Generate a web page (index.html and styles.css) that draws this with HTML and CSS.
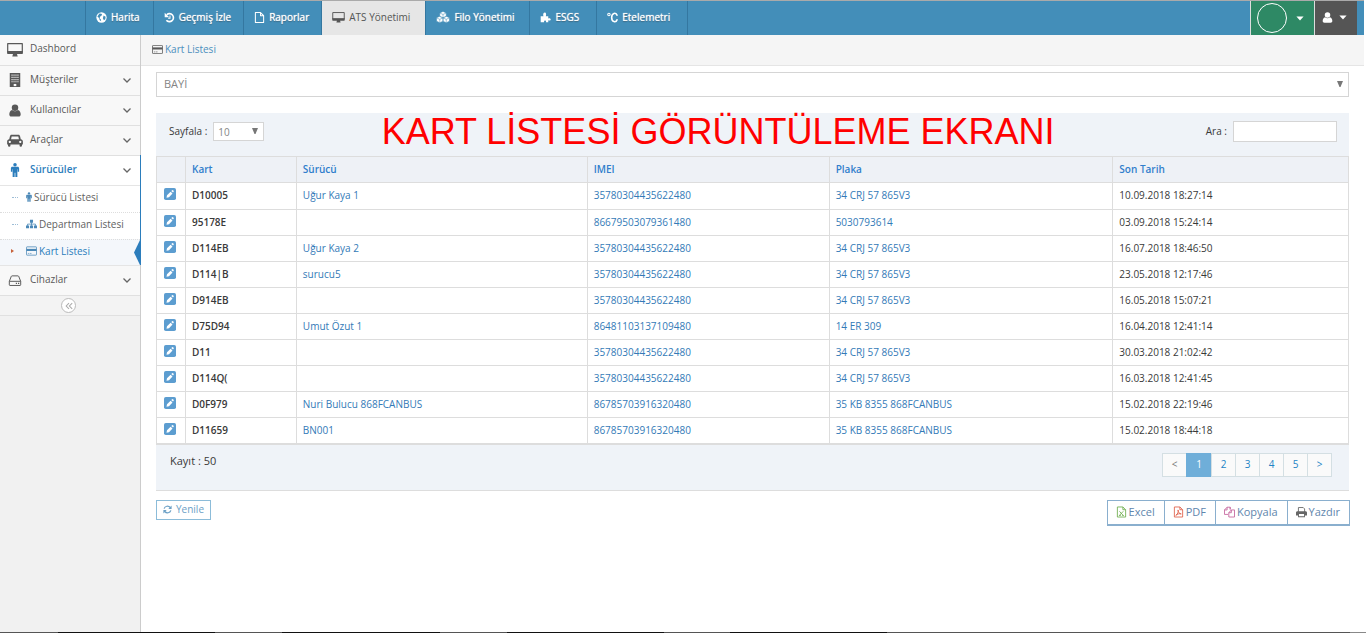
FILE: index.html
```html
<!DOCTYPE html>
<html lang="tr">
<head>
<meta charset="utf-8">
<title>Kart Listesi</title>
<link rel="stylesheet" href="styles.css">
</head>
<body>
<svg class="sprite" aria-hidden="true">
  <symbol id="globe" viewBox="0 0 16 16"><circle cx="8" cy="8" r="7.5" fill="currentColor"/><path d="M5 2l3 .5 1 2-2.5 1.5L5 9l2 1.500.5 3L5.500 12 4 8.500 2 6.500zM11 5l3 2-.5 3.500-2 1.500-1.500-3z" fill="#438eb9"/></symbol>
  <symbol id="history" viewBox="0 0 16 16"><path d="M4 4A5.800 5.800 0 1 1 3.500 12" fill="none" stroke="currentColor" stroke-width="2.400"/><path d="M1 1v6.500h6.500z" fill="currentColor"/><path d="M8.700 5v4H6" fill="none" stroke="currentColor" stroke-width="1.500"/></symbol>
  <symbol id="file" viewBox="0 0 16 16"><path d="M2 .800h7.500l4.500 4.500v10H2zM9.500.800v4.700H14" fill="none" stroke="currentColor" stroke-width="1.500" stroke-linejoin="round"/></symbol>
  <symbol id="desktop" viewBox="0 0 16 14"><path d="M.7.700h14.600V9H.7z" fill="none" stroke="currentColor" stroke-width="1.200" stroke-linejoin="round"/><path d="M.1 8h15.800v2.300a.7.700 0 0 1-.7.700H10l.7 2.500H5.300L6 11H.8a.7.700 0 0 1-.7-.7z" fill="currentColor"/></symbol>
  <symbol id="cubes" viewBox="0 0 18 16"><g fill="currentColor" stroke="#438eb9" stroke-width=".7"><path d="M9 .5l4.300 2v4.700L9 9.500 4.700 7.200V2.500zM4.700 7l4.300 2v4.500l-4.300 2.200L.4 13.500V9zM13.300 7l4.300 2v4.500l-4.300 2.200L9 13.500V9z"/><path d="M4.700 2.700L9 4.600l4.300-1.900M9 4.600v4.600M.4 9.200l4.300 1.900L9 9.200l4.300 1.900 4.300-1.900M4.700 11.100v4.500M13.300 11.100v4.500" fill="none"/></g></symbol>
  <symbol id="puzzle" viewBox="0 0 16 16"><path d="M1 6h4c-2-6.500 5-7.500 3.700-1L8.500 6H12v3.500c4.500-2 5 4.500 0 2.500v3H8.500c1.500-3.500-3.500-3.500-2.500 0H1z" fill="currentColor"/></symbol>
  <symbol id="celsius" viewBox="0 0 16 16"><circle cx="2.800" cy="3.500" r="1.800" fill="none" stroke="currentColor" stroke-width="1.500"/><path d="M15 5.500C13-.5 6.800 1.500 6.800 8s6.200 8.500 8.200 2.500" fill="none" stroke="currentColor" stroke-width="2.300"/></symbol>
  <symbol id="user" viewBox="0 0 16 16"><circle cx="8" cy="4.500" r="4" fill="currentColor"/><path d="M4.500 7.500C2 8 1 10.500 1 13c0 1.500 1 2.500 2.500 2.500h9c1.500 0 2.500-1 2.500-2.500 0-2.500-1-5-3.500-5.500-2 2-5 2-7 0z" fill="currentColor"/></symbol>
  <symbol id="building" viewBox="0 0 16 16"><path d="M2 0h12v16H2z" fill="currentColor"/><path d="M4 2.500h8M4 5h8M4 7.500h8M4 10h8" stroke="#f8f8f8" stroke-width="1.300" stroke-dasharray="1.250 1"/><path d="M6.500 12.500h3V15h-3z" fill="#f8f8f8"/></symbol>
  <symbol id="car" viewBox="0 0 18 16"><path fill-rule="evenodd" d="M5 2h8c1 0 1.500.7 1.800 1.700L15.600 7c1.500.2 2.400 1.200 2.400 2.500V13h-1v1.200a1.400 1.400 0 0 1-2.800 0V13H3.800v1.200a1.400 1.400 0 0 1-2.800 0V13H0V9.500C0 8.200.9 7.200 2.400 7l.8-3.300C3.500 2.700 4 2 5 2zm.2 2L4.500 7h9l-.7-3zM3 8.800a1.300 1.300 0 1 0 .1 0zm12 0a1.300 1.300 0 1 0 .1 0z" fill="currentColor"/></symbol>
  <symbol id="male" viewBox="0 0 10 16"><circle cx="5" cy="2" r="2" fill="currentColor"/><path d="M2 4.300h6c1 0 1.700.7 1.700 1.700v4H8.100V7h-.4v9H5.400v-5h-.8v5H2.300V7h-.4v3H.3V6c0-1 .7-1.700 1.700-1.700z" fill="currentColor"/></symbol>
  <symbol id="sitemap" viewBox="0 0 18 16"><path d="M6.500 1h5v5h-5zM0 10.500h5v4.500H0zM6.500 10.500h5v4.500h-5zM13 10.500h5v4.500h-5z" fill="currentColor"/><path d="M9 5v6M2.500 11V8.200h13V11" fill="none" stroke="currentColor" stroke-width="1.300"/></symbol>
  <symbol id="card" viewBox="0 0 18 15"><rect x=".7" y=".7" width="16.600" height="13.600" rx="1" fill="none" stroke="currentColor" stroke-width="1.300"/><path d="M.7 4h16.600v3.500H.7z" fill="currentColor"/><path d="M3 11.500h2M6 11.500h3" stroke="currentColor"/></symbol>
  <symbol id="hdd" viewBox="0 0 16 16"><path d="M1 9l2.400-6c.2-.5.500-.7 1-.7h7.200c.5 0 .8.200 1 .7L15 9v4.300c0 .5-.3.8-.8.8H1.800c-.5 0-.8-.3-.8-.8zM1 9h14" fill="none" stroke="currentColor" stroke-width="1.200"/><path d="M9 11.500h1.500M11.700 11.500h1.500" stroke="currentColor" stroke-width="1.500"/></symbol>
  <symbol id="down" viewBox="0 0 10 10"><path d="M1.500 3.500L5 7l3.500-3.500" fill="none" stroke="currentColor" stroke-width="1.300"/></symbol>
  <symbol id="caret" viewBox="0 0 10 6"><path d="M.5.500h9L5 5.500z" fill="currentColor"/></symbol>
  <symbol id="arrow" viewBox="0 0 6 6"><path d="M0 0h6L3.500 6h-1z" fill="currentColor"/></symbol>
  <symbol id="edit" viewBox="0 0 12 12"><rect width="12" height="12" rx="1.800" fill="#5c9dd0"/><path d="M2.500 9.700l.5-2.500 3.600-3.500 1.900 1.900L5 9.200zM7.200 3.100l1-.9c.5-.4 1.900.9 1.500 1.500l-.7.900z" fill="#fff"/></symbol>
  <symbol id="refresh" viewBox="0 0 16 16"><path d="M2 6.500C3.500 1.500 9.500.800 13 4.500M14 9.500c-1.500 5-7.500 5.700-11 2" fill="none" stroke="currentColor" stroke-width="2.200"/><path d="M15.300 1v6H9.500zM.7 15V9h5.800z" fill="currentColor"/></symbol>
  <symbol id="excel" viewBox="0 0 16 16"><path d="M2 .700h8l4 4v10.600H2zM10 .700v4h4M5 7l5.500 6M10.500 7L5 13M4.500 13h2.500M9 13h2.300" fill="none" stroke="currentColor" stroke-width="1.200"/></symbol>
  <symbol id="pdf" viewBox="0 0 16 16"><path d="M2 .700h8l4 4v10.600H2zM10 .700v4h4M4 13c3-2 4-5 3.300-8C8 9 9 10.500 12 10.800 9 10 6 11 4 13z" fill="none" stroke="currentColor" stroke-width="1.200"/></symbol>
  <symbol id="copy" viewBox="0 0 16 16"><path d="M6 11.500H.700V5L4.500 1H9v3.500M4.500 1v4H.700M7 15.300V9l3.700-4h4.600v10.300zM10.700 5v4H7M9 1v3" fill="none" stroke="currentColor" stroke-width="1.300"/></symbol>
  <symbol id="print" viewBox="0 0 16 16"><path d="M3.500 8V1.500h7l2 2V8" fill="none" stroke="currentColor" stroke-width="1.300"/><path fill-rule="evenodd" d="M2 7h12c1 0 2 .8 2 2v4h-3v2.500H3V13H0V9c0-1.200 1-2 2-2zm2.300 4v3.200h7.400V11z" fill="currentColor"/></symbol>
</svg>

<header class="topbar">
  <nav class="menu">
    <a href="#"><svg class="ico"><use href="#globe"/></svg>Harita</a>
    <a href="#"><svg class="ico"><use href="#history"/></svg>Geçmiş İzle</a>
    <a href="#"><svg class="ico"><use href="#file"/></svg>Raporlar</a>
    <a href="#" class="active"><svg class="ico wide"><use href="#desktop"/></svg>ATS Yönetimi</a>
    <a href="#"><svg class="ico wide"><use href="#cubes"/></svg>Filo Yönetimi</a>
    <a href="#"><svg class="ico"><use href="#puzzle"/></svg>ESGS</a>
    <a href="#"><svg class="ico"><use href="#celsius"/></svg>Etelemetri</a>
  </nav>
  <div class="account">
    <button class="firm" aria-label="Firma"><span class="ring"></span><svg class="caret"><use href="#caret"/></svg></button>
    <button class="person" aria-label="Kullanıcı"><svg class="ico"><use href="#user"/></svg><svg class="caret"><use href="#caret"/></svg></button>
  </div>
</header>

<div class="layout">
  <aside class="sidebar">
    <ul class="side">
      <li><a href="#"><svg class="lead"><use href="#desktop"/></svg>Dashbord</a></li>
      <li><a href="#"><svg class="lead"><use href="#building"/></svg>Müşteriler<svg class="chev"><use href="#down"/></svg></a></li>
      <li><a href="#"><svg class="lead small"><use href="#user"/></svg>Kullanıcılar<svg class="chev"><use href="#down"/></svg></a></li>
      <li><a href="#"><svg class="lead"><use href="#car"/></svg>Araçlar<svg class="chev"><use href="#down"/></svg></a></li>
      <li class="open"><a href="#"><svg class="lead"><use href="#male"/></svg>Sürücüler<svg class="chev"><use href="#down"/></svg></a>
        <ul class="sub">
          <li><a href="#"><span class="dots"></span><svg class="thin"><use href="#male"/></svg>Sürücü Listesi</a></li>
          <li><a href="#"><span class="dots"></span><svg><use href="#sitemap"/></svg>Departman Listesi</a></li>
          <li class="current"><a href="#"><span class="mark"></span><svg><use href="#card"/></svg>Kart Listesi</a></li>
        </ul>
      </li>
      <li><a href="#"><svg class="lead small"><use href="#hdd"/></svg>Cihazlar<svg class="chev"><use href="#down"/></svg></a></li>
    </ul>
    <div class="collapse"><button aria-label="Menüyü daralt"><svg viewBox="0 0 10 10"><path d="M5 1.500L1.500 5 5 8.500M9 1.500L5.500 5 9 8.500" fill="none" stroke="currentColor" stroke-width="1.300"/></svg></button></div>
  </aside>

  <main class="main">
    <div class="crumbs"><svg><use href="#card"/></svg><a href="#">Kart Listesi</a></div>
    <div class="content">
      <div class="pick dealer">
        <select aria-label="Bayi"><option>BAYİ</option></select>
        <svg><use href="#arrow"/></svg>
      </div>

      <section class="panel">
        <div class="tools">
          <label for="size">Sayfala :</label>
          <div class="pick size">
            <select id="size"><option>10</option></select>
            <svg><use href="#arrow"/></svg>
          </div>
          <h1>KART LİSTESİ GÖRÜNTÜLEME EKRANI</h1>
          <label for="search">Ara :</label>
          <input id="search" type="text">
        </div>
        <table>
          <colgroup><col class="c-edit"><col class="c-card"><col class="c-driver"><col class="c-imei"><col class="c-plate"><col></colgroup>
          <thead><tr><th></th><th>Kart</th><th>Sürücü</th><th>IMEI</th><th>Plaka</th><th>Son Tarih</th></tr></thead>
          <tbody>
            <tr><td><a href="#" aria-label="Düzenle"><svg><use href="#edit"/></svg></a></td><td class="card">D10005</td><td><a href="#">Uğur Kaya 1</a></td><td><a href="#">35780304435622480</a></td><td><a href="#">34 CRJ 57 865V3</a></td><td>10.09.2018 18:27:14</td></tr>
            <tr><td><a href="#" aria-label="Düzenle"><svg><use href="#edit"/></svg></a></td><td class="card">95178E</td><td></td><td><a href="#">86679503079361480</a></td><td><a href="#">5030793614</a></td><td>03.09.2018 15:24:14</td></tr>
            <tr><td><a href="#" aria-label="Düzenle"><svg><use href="#edit"/></svg></a></td><td class="card">D114EB</td><td><a href="#">Uğur Kaya 2</a></td><td><a href="#">35780304435622480</a></td><td><a href="#">34 CRJ 57 865V3</a></td><td>16.07.2018 18:46:50</td></tr>
            <tr><td><a href="#" aria-label="Düzenle"><svg><use href="#edit"/></svg></a></td><td class="card">D114|B</td><td><a href="#">surucu5</a></td><td><a href="#">35780304435622480</a></td><td><a href="#">34 CRJ 57 865V3</a></td><td>23.05.2018 12:17:46</td></tr>
            <tr><td><a href="#" aria-label="Düzenle"><svg><use href="#edit"/></svg></a></td><td class="card">D914EB</td><td></td><td><a href="#">35780304435622480</a></td><td><a href="#">34 CRJ 57 865V3</a></td><td>16.05.2018 15:07:21</td></tr>
            <tr><td><a href="#" aria-label="Düzenle"><svg><use href="#edit"/></svg></a></td><td class="card">D75D94</td><td><a href="#">Umut Özut 1</a></td><td><a href="#">86481103137109480</a></td><td><a href="#">14 ER 309</a></td><td>16.04.2018 12:41:14</td></tr>
            <tr><td><a href="#" aria-label="Düzenle"><svg><use href="#edit"/></svg></a></td><td class="card">D11</td><td></td><td><a href="#">35780304435622480</a></td><td><a href="#">34 CRJ 57 865V3</a></td><td>30.03.2018 21:02:42</td></tr>
            <tr><td><a href="#" aria-label="Düzenle"><svg><use href="#edit"/></svg></a></td><td class="card">D114Q(</td><td></td><td><a href="#">35780304435622480</a></td><td><a href="#">34 CRJ 57 865V3</a></td><td>16.03.2018 12:41:45</td></tr>
            <tr><td><a href="#" aria-label="Düzenle"><svg><use href="#edit"/></svg></a></td><td class="card">D0F979</td><td><a href="#">Nuri Bulucu 868FCANBUS</a></td><td><a href="#">86785703916320480</a></td><td><a href="#">35 KB 8355 868FCANBUS</a></td><td>15.02.2018 22:19:46</td></tr>
            <tr><td><a href="#" aria-label="Düzenle"><svg><use href="#edit"/></svg></a></td><td class="card">D11659</td><td><a href="#">BN001</a></td><td><a href="#">86785703916320480</a></td><td><a href="#">35 KB 8355 868FCANBUS</a></td><td>15.02.2018 18:44:18</td></tr>
          </tbody>
        </table>
        <div class="foot">
          <span>Kayıt : 50</span>
          <nav class="pages" aria-label="Sayfalar"><a href="#" class="off">&lt;</a><a href="#" class="on">1</a><a href="#">2</a><a href="#">3</a><a href="#">4</a><a href="#">5</a><a href="#">&gt;</a></nav>
        </div>
      </section>

      <div class="actions">
        <button class="reload"><svg><use href="#refresh"/></svg>Yenile</button>
        <div class="export">
          <button><svg class="green"><use href="#excel"/></svg>Excel</button>
          <button><svg class="red"><use href="#pdf"/></svg>PDF</button>
          <button><svg class="pink"><use href="#copy"/></svg>Kopyala</button>
          <button><svg class="gray"><use href="#print"/></svg>Yazdır</button>
        </div>
      </div>
    </div>
  </main>
</div>
<div class="strip"></div>
</body>
</html>
```
FILE: styles.css
```css
* { box-sizing: border-box; }
body {
  margin: 0;
  padding-right: 2px;
  min-height: 100vh;
  display: flex;
  flex-direction: column;
  background: #fff;
  color: #393939;
  font: 10px/16px "Open Sans", "Noto Sans", sans-serif;
}
a { color: #337ab7; text-decoration: none; }
ul { list-style: none; margin: 0; padding: 0; }
button, input, select { font: inherit; color: inherit; margin: 0; }
svg { flex: none; }
.sprite { position: absolute; width: 0; height: 0; }

.topbar {
  display: flex;
  justify-content: space-between;
  height: 35px;
  border-top: 1px solid #aaa;
  background: #438eb9;
}
.menu { display: flex; margin-left: 85px; border-left: 1px solid #3477a0; }
.menu a {
  display: flex;
  align-items: center;
  gap: 4px;
  padding: 0 12px 2px 10px;
  border-right: 1px solid #3477a0;
  color: #fff;
  text-shadow: 0 0 1px #fff, 0 1px 1px rgba(0, 0, 0, .4);
}
.menu a:first-child { padding-right: 13px; }
.menu a:nth-child(n+4) { padding-right: 15px; }
.menu a:nth-child(n+6) { padding-right: 17px; }
.menu .active { background: #e6e6e6; color: #555; text-shadow: none; }
.ico { width: 11px; height: 11px; }
.ico.wide { width: 14px; height: 12px; }
.active .ico.wide { width: 13px; height: 11px; }
.account { display: flex; margin-right: 7px; }
.account button {
  display: flex;
  align-items: center;
  border: 0;
  border-left: 1px solid #ddd;
  color: #fff;
}
.account .firm { width: 64px; padding: 0 10px 0 6px; justify-content: space-between; background: #2e8965; }
.account .person { width: 43px; padding: 0 10px 2px 7px; justify-content: space-between; background: #555; }
.ring { width: 30px; height: 30px; border: 1px solid #fff; border-radius: 50%; }
.caret { width: 8px; height: 5px; }

.layout { flex: 1; display: flex; }
.sidebar { width: 141px; flex: none; background: #f1f1f1; border-right: 1px solid #ccc; }
.side > li { border-bottom: 1px solid #e0e0e0; background: #f8f8f8; }
.side > li > a {
  display: flex;
  align-items: center;
  height: 29px;
  padding: 0 8px 4px 7px;
  color: #585858;
}
.side > li:first-child > a { height: 30px; }
.lead { width: 16px; height: 14px; margin: 3px 7px 0 0; }
.lead.small { height: 13px; }
.chev { width: 10px; height: 10px; margin: 2px 0 0 auto; color: #666; }
.side > .open { position: relative; background: #fff; border-bottom-color: #e5e5e5; }
.side > .open::after { content: ""; position: absolute; top: -1px; bottom: 0; right: -1px; width: 1px; background: #2b7dbc; }
.side > .open > a { color: #2b7dbc; font-weight: 600; }
.sub { border-top: 1px solid #e5e5e5; }
.sub li + li { border-top: 1px dotted #ddd; }
.sub a { display: flex; align-items: center; height: 26px; padding: 0 0 4px 12px; color: #616161; }
.sub svg { width: 11px; height: 10px; margin-right: 2px; color: #4b88b7; }
.sub .thin { width: 6px; }
.dots { width: 6px; margin-right: 8px; border-top: 1px dotted #9dbdd6; }
.mark { margin: 0 12px 0 -1px; border: 2px solid transparent; border-left: 3px solid #c86139; border-right: 0; }
.current { position: relative; background: #f4f7fb; }
.sub .current a { height: 25px; color: #2b7dbc; }
.current::after {
  content: "";
  position: absolute;
  top: 0;
  bottom: 0;
  right: 0;
  width: 6px;
  background: #2b7dbc;
  clip-path: polygon(100% 0, 0 50%, 100% 100%);
}
.collapse { height: 20px; padding-top: 2px; background: #f3f3f3; border-bottom: 1px solid #e0e0e0; }
.collapse button {
  display: grid;
  place-items: center;
  width: 15px;
  height: 15px;
  margin-left: 61px;
  padding: 0;
  border: 1px solid #bbb;
  border-radius: 50%;
  background: #fff;
  color: #aaa;
}
.collapse svg { width: 8px; height: 8px; }

.main { flex: 1; min-width: 0; }
.crumbs {
  display: flex;
  align-items: center;
  gap: 2px;
  height: 31px;
  padding: 0 11px 2px;
  background: #f5f5f5;
  border-bottom: 1px solid #e5e5e5;
}
.crumbs svg { width: 11px; height: 9px; color: #585858; }
.crumbs a { color: #4c8fbd; }
.content { padding: 6px 15px 0; }
.pick { position: relative; }
.pick select {
  display: block;
  width: 100%;
  height: 100%;
  padding: 0 7px 2px;
  border: 1px solid #d5d5d5;
  border-radius: 0;
  background: #fff;
  color: #858585;
  appearance: none;
}
.pick svg { position: absolute; right: 6px; top: 50%; width: 6px; height: 6px; margin-top: -4px; color: #777; pointer-events: none; }
.dealer { height: 25px; font-size: 11px; }
.size { width: 51px; height: 19px; }
.size select { padding: 0 4px; }

.panel { margin-top: 16px; background: #eff3f8; border-bottom: 1px solid #ddd; }
.tools { display: flex; align-items: center; height: 43px; padding: 0 12px 6px 13px; }
.tools label { margin-right: 6px; padding-bottom: 2px; }
.tools h1 {
  flex: 1;
  margin: 0;
  padding-right: 34px;
  color: #f00;
  font: 36px/36px "Liberation Sans", Arial, sans-serif;
  text-align: center;
}
.tools input { width: 104px; height: 21px; border: 1px solid #d5d5d5; background: #fff; }

table { width: 100%; table-layout: fixed; border-collapse: collapse; background: #fff; }
.c-edit { width: 29px; }
.c-card { width: 9.3%; }
.c-driver { width: 24.4%; }
.c-imei { width: 20.3%; }
.c-plate { width: 23.8%; }
th, td { height: 26px; padding: 0 6px 2px; border: 1px solid #ddd; text-align: left; }
th { background: #eef1f6; color: #307ecc; font-weight: 600; }
td:first-child { padding: 0 8px 2px 7px; }
tbody tr:first-child td { height: 27px; }
tbody tr:last-child td { border-bottom-width: 2px; padding-bottom: 0; }
td svg { display: block; width: 12px; height: 12px; margin-bottom: 2px; }
.card { font-weight: 600; }

.foot { display: flex; justify-content: space-between; height: 45px; padding: 8px 17px 0 14px; font-size: 11px; line-height: 15px; }
.pages { display: flex; height: 24px; padding-left: 1px; font-size: 10px; }
.pages a {
  display: grid;
  place-items: center;
  width: 25px;
  margin-left: -1px;
  border: 1px solid #d4dfe3;
  background: #fafafa;
  color: #2283c5;
}
.pages .off { color: #777; }
.pages .on { width: 26px; background: #6faed9; border-color: #6faed9; color: #fff; }

.actions { display: flex; justify-content: space-between; align-items: flex-start; margin: 9px -1px 0 0; }
.actions button { display: flex; align-items: center; background: #fff; }
.reload { gap: 4px; height: 20px; padding: 0 6px 1px; border: 1px solid #8cbcd9; color: #6ba0c6; }
.reload svg { width: 9px; height: 9px; }
.export { display: flex; border: 1px solid #8aafce; border-bottom-width: 2px; font-size: 11px; }
.export button { gap: 2px; height: 23px; padding: 0 9px 0 8px; border: 0; color: #5f86ad; }
.export button + button { border-left: 1px solid #8aafce; }
.export svg { width: 11px; height: 12px; }
.green { color: #69aa46; }
.red { color: #dd5a43; }
.pink { color: #c6699f; }
.gray { color: #666; }

.strip {
  height: 1px;
  margin-right: -2px;
  background: linear-gradient(90deg, #555 58px, #111 58px 215px, #555 215px 282px, #111 282px 440px, #555 440px 507px, #111 507px 664px, #555 664px 730px, #111 730px 887px, #555 887px 1350px, #888 1350px);
}
```
